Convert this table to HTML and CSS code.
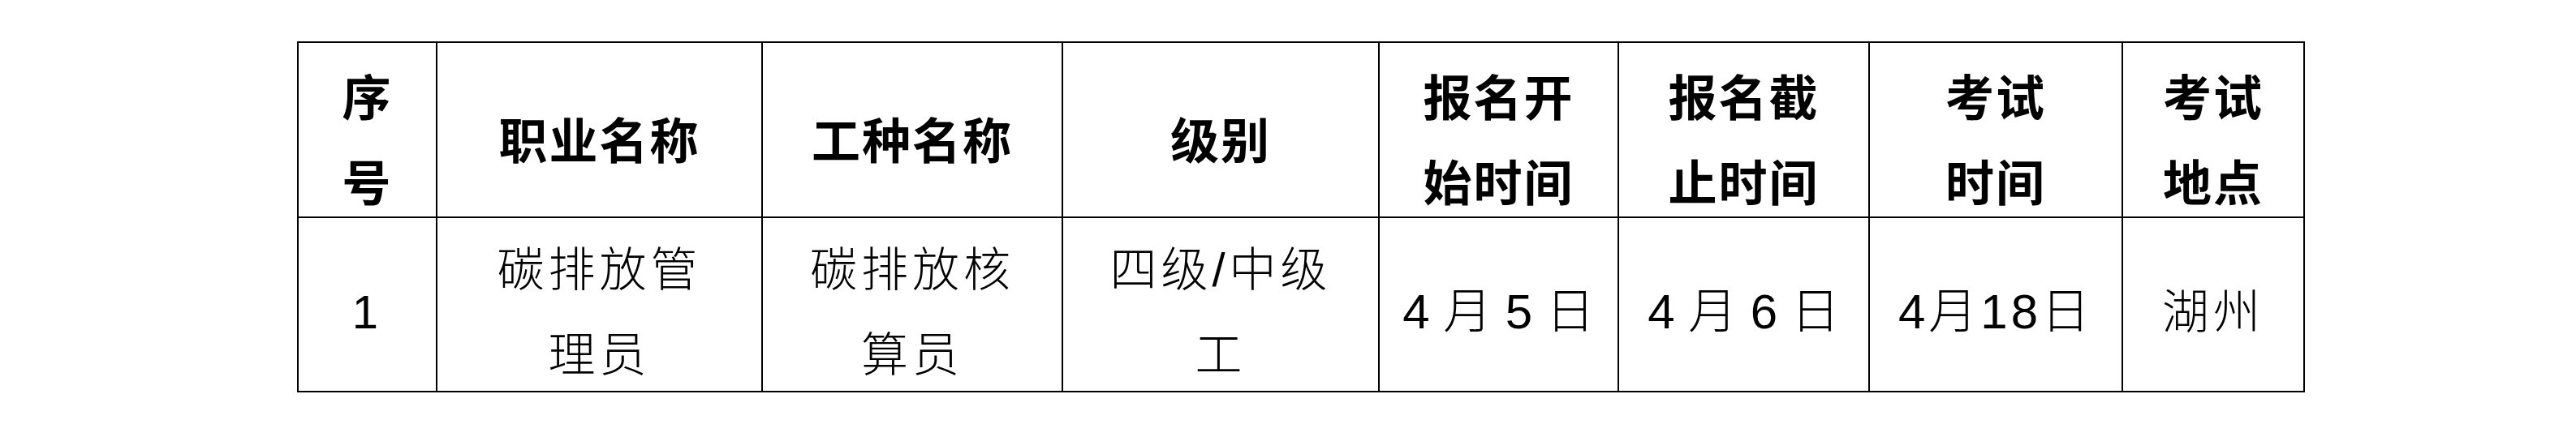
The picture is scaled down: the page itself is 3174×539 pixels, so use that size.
FILE: index.html
```html
<!DOCTYPE html>
<html lang="zh-CN">
<head>
<meta charset="utf-8">
<title>考试安排</title>
<link rel="stylesheet" href="styles.css">
</head>
<body>
<table class="exam">
  <colgroup>
    <col class="c1"><col class="c2"><col class="c3"><col class="c4"><col class="c5"><col class="c6"><col class="c7"><col class="c8">
  </colgroup>
  <thead>
    <tr class="head">
      <th><span class="v">序<br>号</span></th>
      <th><span class="v">职业名称</span></th>
      <th><span class="v">工种名称</span></th>
      <th><span class="v">级别</span></th>
      <th><span class="v">报名开<br>始时间</span></th>
      <th><span class="v">报名截<br>止时间</span></th>
      <th><span class="v">考试<br>时间</span></th>
      <th><span class="v">考试<br>地点</span></th>
    </tr>
  </thead>
  <tbody>
    <tr class="row">
      <td><span class="v">1</span></td>
      <td><span class="v">碳排放管<br>理员</span></td>
      <td><span class="v">碳排放核<br>算员</span></td>
      <td><span class="v">四级/中级<br>工</span></td>
      <td class="date"><span class="v">4 月 5 日</span></td>
      <td class="date"><span class="v">4 月 6 日</span></td>
      <td class="date tight"><span class="v">4月18日</span></td>
      <td><span class="v">湖州</span></td>
    </tr>
  </tbody>
</table>
</body>
</html>
```

FILE: styles.css
```css
html, body {
  margin: 0;
  padding: 0;
  background: #ffffff;
}

body {
  padding: 51px 0 0 366px;
}

.exam {
  border-collapse: collapse;
  table-layout: fixed;
  width: 2474px;
  color: #000;
}

.c1 { width: 171px; }
.c2 { width: 401px; }
.c3 { width: 370px; }
.c4 { width: 390px; }
.c5 { width: 295px; }
.c6 { width: 309px; }
.c7 { width: 312px; }
.c8 { width: 224px; }

.exam th,
.exam td {
  border: 2px solid #000;
  text-align: center;
  vertical-align: middle;
  padding: 0;
  line-height: 105px;
}

.v {
  display: block;
  margin-top: 9px;
  margin-bottom: -9px;
}

.head {
  height: 216px;
}

.row {
  height: 215px;
}

.exam th {
  font-family: "Noto Sans CJK SC", sans-serif;
  font-weight: 700;
  font-size: 60px;
  letter-spacing: 2px;
}

.exam td {
  font-family: "Liberation Sans", "Noto Sans CJK SC", sans-serif;
  font-weight: 300;
  font-size: 58px;
  letter-spacing: 5px;
}

.exam td.date {
  letter-spacing: 0;
  font-size: 60px;
}

.exam td.tight {
  letter-spacing: 4px;
}
```
